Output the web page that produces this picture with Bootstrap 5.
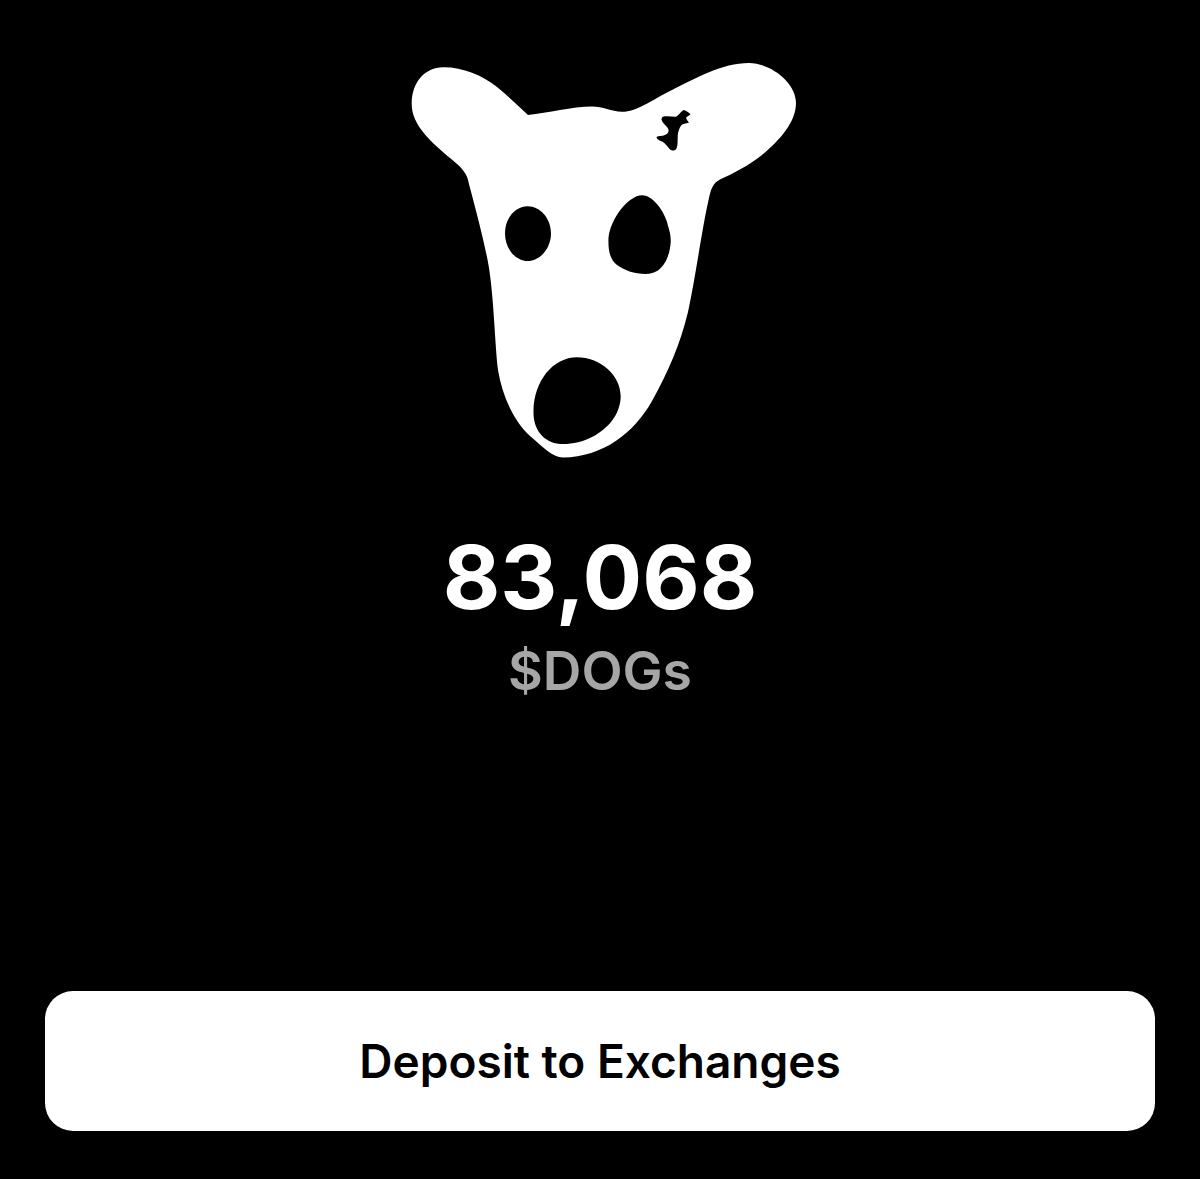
<!DOCTYPE html>
<html lang="en">

<head>
    <meta charset="UTF-8">
    <title>DOGS Balance</title>
    <link href="https://cdn.jsdelivr.net/npm/bootstrap@5.3.3/dist/css/bootstrap.min.css" rel="stylesheet">
    <style>
        body {
            background: #000;
            font-family: Inter, "Liberation Sans", sans-serif;
        }

        .balance-screen {
            height: 1179px;
            padding: 50px 45px 48px;
        }

        .dog-logo {
            display: block;
            width: 420px;
            height: 420px;
        }

        .balance-amount {
            margin-top: 54px;
            font-size: 88.5px;
            font-weight: 700;
            line-height: 106px;
            color: #fff;
        }

        .balance-unit {
            margin-top: 11px;
            font-size: 53.5px;
            font-weight: 600;
            line-height: 60px;
            color: #a6a6a6;
        }

        .deposit-btn {
            height: 140px;
            font-size: 46px;
            font-weight: 600;
            color: #000;
            background: #fff;
            border: 0;
            border-radius: 28px;
        }
    </style>
</head>

<body>
    <div class="balance-screen d-flex flex-column align-items-center">
        <!-- dog head, coordinates follow the page -->
        <svg class="dog-logo" viewBox="390 50 420 420" xmlns="http://www.w3.org/2000/svg">
            <path fill="#fff" fill-rule="evenodd" d="M528 115C548 113 572 106.500 592 106.500C603 106.500 611 111.500 622 111.800C636 112 650 101 672 90C695 78.500 722 63 749 63C770 63 796 82 796 103C796 122 780 140 762 155C748 166 732 174 720 179.500C713 183 711 189 709 198C702 228 696 275 688 312C680 345 668 372 652 401C634 433 603 457 563 457.500C552 457 543 447 530 436C513 420 502 395 498 370C495 345 494 300 489 268C484 238 473 200 468 180C466 172 460 166 450 158C432 143 411 125 411.700 103C412 82 425 67.500 443 67.300C462 67 482 75 497 87C508 96 518 106 528 115Z
                M527.700 206.300C540.400 206.300 551 218.500 551 233.300C551 248.100 540.400 261 527.700 261C515 261 505 248.100 505 233.300C505 218.500 515 206.300 527.700 206.300Z
                M642 195.300C652 195.300 663 209 667 222C669 230 671 234 670.700 242C670 255 664 274 646 274C634 274 624 270 617 265C610 260 608 250 608.500 238C610 220 628 195.300 642 195.300Z
                M577 357.300C600 357.300 621 375 620.700 397C620 415 608 428 594 436C583 442 573 444 563 444C546 444 533 432 533.500 411C534 381 553 357.300 577 357.300Z
                M684 110C686 110.500 689 112.500 690.500 114.300C688.500 116 686.500 117 686 118C687 120 688 121.500 689 122.500C686 124 683 123.500 681.500 125C679 128 678 132 677.700 136C677.500 141 678 145 676.500 148.500C675 151 672 151 670 149.500C667 146 665.500 143.500 662 141.500C660 140.500 657 140 656.500 137C659 135.500 663 136.500 666 134.500C669.500 132.500 669 129.500 667 127C665 124.500 662 122.500 661.500 119.500C661.500 117 663 116.500 665 116.300C668 116 672 116.500 675.500 116.800C678 116.500 681 111 684 110Z" />
        </svg>

        <div class="balance-amount">83,068</div>
        <div class="balance-unit">$DOGs</div>

        <button type="button" class="btn deposit-btn w-100 mt-auto">Deposit to Exchanges</button>
    </div>

    <script src="https://cdn.jsdelivr.net/npm/bootstrap@5.3.3/dist/js/bootstrap.bundle.min.js"></script>
</body>

</html>
